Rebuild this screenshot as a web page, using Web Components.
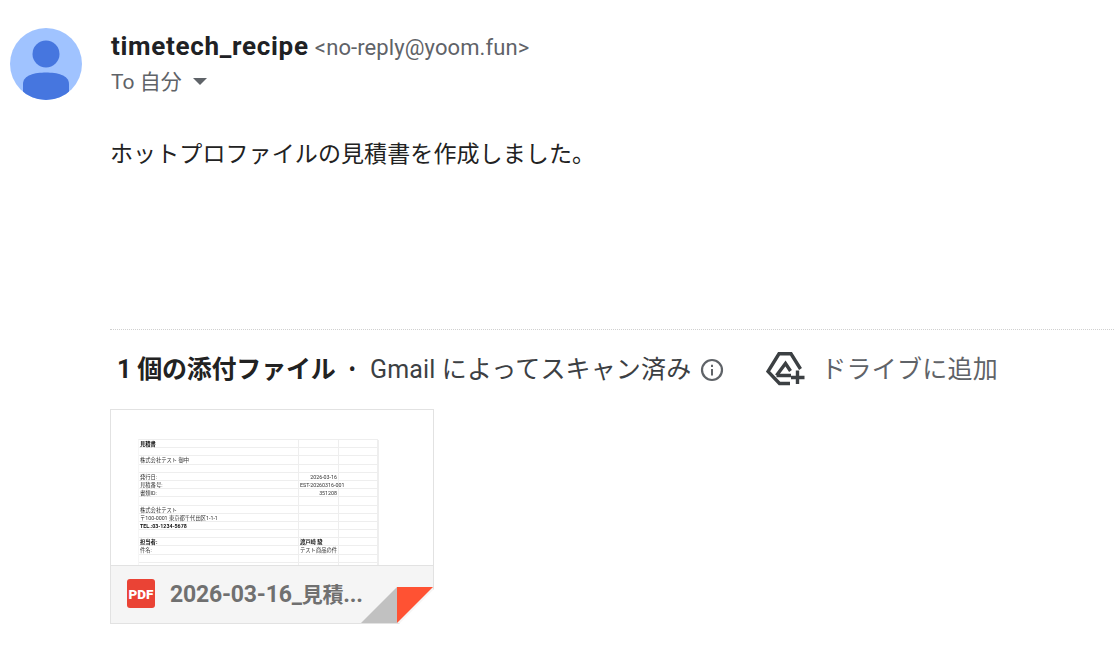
<!DOCTYPE html>
<html lang="ja">
<head>
<meta charset="utf-8">
<title>mail</title>
<style>
    html, body { margin: 0; background: #fff; }
    body { font-family: Roboto, "Noto Sans CJK JP", sans-serif; overflow: hidden; height: 656px; }
</style>
</head>
<body>
<mail-view>
    <mail-header slot="header" name="timetech_recipe" address="<no-reply@yoom.fun>" to="To 自分"></mail-header>
    ホットプロファイルの見積書を作成しました。
    <attachment-bar slot="bar" count="1 個の添付ファイル" scan="Gmail によってスキャン済み" action="ドライブに追加"></attachment-bar>
    <attachment-card slot="card" filename="2026-03-16_見積..."></attachment-card>
</mail-view>

<script>
    const sans = 'Roboto, "Noto Sans CJK JP", sans-serif'

    class MailView extends HTMLElement {
        constructor() {
            super()
            this.attachShadow({ mode: "open" }).innerHTML = `
                <style>
                    :host { display: block; padding: 28px 0 0 10px; color: #222; }
                    .body { margin: 39px 0 0 100px; height: 190px; font: 400 23px/32px ${sans}; letter-spacing: .1px; color: #222; }
                    .rest { margin-left: 100px; }
                </style>
                <slot name="header"></slot>
                <div class="body"><slot></slot></div>
                <div class="rest">
                    <slot name="bar"></slot>
                    <slot name="card"></slot>
                </div>`
        }
    }

    class MailHeader extends HTMLElement {
        constructor() {
            super()
            const a = n => this.getAttribute(n).replace(/</g, "&lt;")
            this.attachShadow({ mode: "open" }).innerHTML = `
                <style>
                    :host { display: flex; gap: 29px; font-family: ${sans}; }
                    svg { display: block; flex: none; }
                    .name { font-size: 26px; letter-spacing: .7px; font-weight: 700; color: #202124; line-height: 36px; white-space: nowrap; }
                    .addr { font-size: 22px; letter-spacing: .1px; font-weight: 400; color: #5f6368; margin-left: -1px; }
                    .line { display: flex; align-items: center; height: 28px; font-size: 21px; color: #5f6368; gap: 11px; }
                    .arrow { width: 0; height: 0; border: 7px solid transparent; border-top-color: #5f6368; border-bottom: 0; margin-top: 3px; }
                </style>
                <svg width="72" height="72" viewBox="0 0 72 72">
                    <clipPath id="round"><circle cx="36" cy="36" r="36"/></clipPath>
                    <circle cx="36" cy="36" r="36" fill="#a0c3ff"/>
                    <circle cx="36" cy="26" r="13.5" fill="#4676df"/>
                    <path clip-path="url(#round)" d="M13 72 V56 C13 47 25 44.500 36 44.500 C47 44.500 59 47 59 56 V72 Z" fill="#4676df"/>
                </svg>
                <div>
                    <div class="name">${a("name")} <span class="addr">${a("address")}</span></div>
                    <div class="line"><span>${a("to")}</span><i class="arrow"></i></div>
                </div>`
        }
    }

    class AttachmentBar extends HTMLElement {
        constructor() {
            super()
            const a = n => this.getAttribute(n)
            this.attachShadow({ mode: "open" }).innerHTML = `
                <style>
                    :host { display: flex; align-items: center; height: 80px; box-sizing: border-box; padding: 0 0 6px 7px; border-top: 1px dotted #d0d0d0; font-family: ${sans}; font-size: 25px; color: #3c4043; }
                    b { font-weight: 700; color: #222; white-space: nowrap; letter-spacing: -.2px; }
                    .dot { margin: 6px 14px 0 13px; color: #222; font-size: 22px; }
                    .scan { white-space: nowrap; color: #3c4043; letter-spacing: .15px; }
                    .info { margin: 6px 0 0 9px; flex: none; }
                    .drive { margin: 4px 0 0 42px; flex: none; }
                    .action { margin-left: 15px; color: #5f6368; white-space: nowrap; letter-spacing: .25px; }
                </style>
                <b>${a("count")}</b>
                <span class="dot">•</span>
                <span class="scan">${a("scan")}</span>
                <svg class="info" width="24" height="24" viewBox="0 0 24 24" fill="none">
                    <circle cx="12" cy="12" r="10" stroke="#5f6368" stroke-width="2.200"/>
                    <path d="M11 11h2v6.500h-2zM11 6.800h2v2.200h-2z" fill="#5f6368"/>
                </svg>
                <svg class="drive" width="40" height="36" viewBox="0 0 40 36" fill="none" stroke="#3c4043" stroke-width="3.400">
                    <path d="M24 32.500 H13.500 L2 20.500 L13 2.800 H25 L34.500 18"/>
                    <path d="M10.500 24.500 L19.500 12.500 L24.500 20 M10.500 24.500 H25"/>
                    <path d="M31.500 19.500 V33 M25 26.500 H38.500"/>
                </svg>
                <span class="action">${a("action")}</span>`
        }
    }

    // [左列, 中列, 太字か, 右寄せか]
    const previewRows = [
        ["見積書", "", true], ["", ""], ["株式会社テスト 御中", ""], ["", ""],
        ["発行日:", "2026-03-16", false, true], ["見積番号:", "EST-20260316-001"], ["書類ID:", "351208", false, true], ["", ""],
        ["株式会社テスト", ""], ["〒100-0001 東京都千代田区1-1-1", ""], ["TEL.:03-1234-5678", "", true], ["", ""],
        ["担当者:", "渡戸崎 駿", true], ["件名:", "テスト商品の件"], ["", ""], ["", ""]
    ]

    class SheetPreview extends HTMLElement {
        constructor() {
            super()
            const rows = previewRows.map(r => `
                <div class="c ${r[2] ? "b" : ""}">${r[0]}</div>
                <div class="c ${r[2] ? "b" : ""} ${r[3] ? "r" : ""}">${r[1]}</div>
                <div class="c"></div>`).join("")
            this.attachShadow({ mode: "open" }).innerHTML = `
                <style>
                    :host { display: block; padding: 29px 55px 0 27px; height: 126px; overflow: hidden; }
                    .sheet { display: grid; grid-template-columns: 160px 40px 40px; grid-auto-rows: 8.2px; border-top: 1px solid #eee; border-right: 1px solid #eee; border-left: 1px solid #f6f6f6; filter: blur(.55px); }
                    .c { font: 400 5.3px/8px ${sans}; color: #333; padding-left: 1px; border-bottom: 1px solid #eee; border-right: 1px solid #eee; white-space: nowrap; box-sizing: border-box; }
                    .r { text-align: right; padding: 0 1px 0 0; }
                    .b { font-weight: 700; color: #111; }
                </style>
                <div class="sheet">${rows}</div>`
        }
    }

    class AttachmentCard extends HTMLElement {
        constructor() {
            super()
            const name = this.getAttribute("filename").replace(/[一-龠]+/g, m => `<span class="cjk">${m}</span>`)
            this.attachShadow({ mode: "open" }).innerHTML = `
                <style>
                    :host { display: block; position: relative; width: 324px; height: 215px; box-sizing: border-box; border: 1px solid #e2e2e2; background: #fff; overflow: hidden;
                            clip-path: polygon(0 0, 100% 0, 100% 180px, 289px 100%, 0 100%); font-family: ${sans}; }
                    .bar { display: flex; align-items: center; height: 58px; box-sizing: border-box; background: #f5f5f5; border-top: 1px solid #e2e2e2; padding: 0 0 3px 16px; gap: 15px; }
                    .name { white-space: nowrap; font-size: 23px; font-weight: 700; letter-spacing: -.2px; color: #707070; }
                    .cjk { font-size: 21px; }
                    .pdf { flex: none; }
                    .pdf text { font: 900 13.5px ${sans}; fill: #fff; }
                    .fold { position: absolute; right: 0; bottom: 0; display: block; }
                </style>
                <sheet-preview></sheet-preview>
                <div class="bar">
                    <svg class="pdf" width="28" height="29" viewBox="0 0 28 29">
                        <rect width="28" height="29" rx="3" fill="#ea4335"/>
                        <text x="14" y="19.500" text-anchor="middle">PDF</text>
                    </svg>
                    <span class="name">${name}</span>
                </div>
                <svg class="fold" width="72" height="36" viewBox="0 0 72 36">
                    <path d="M0 36 L36 0 V36 Z" fill="#c1c1c1"/>
                    <path d="M36 0 H72 L36 36 Z" fill="#ff5233"/>
                </svg>`
        }
    }

    customElements.define("mail-view", MailView)
    customElements.define("mail-header", MailHeader)
    customElements.define("attachment-bar", AttachmentBar)
    customElements.define("sheet-preview", SheetPreview)
    customElements.define("attachment-card", AttachmentCard)
</script>
</body>
</html>
